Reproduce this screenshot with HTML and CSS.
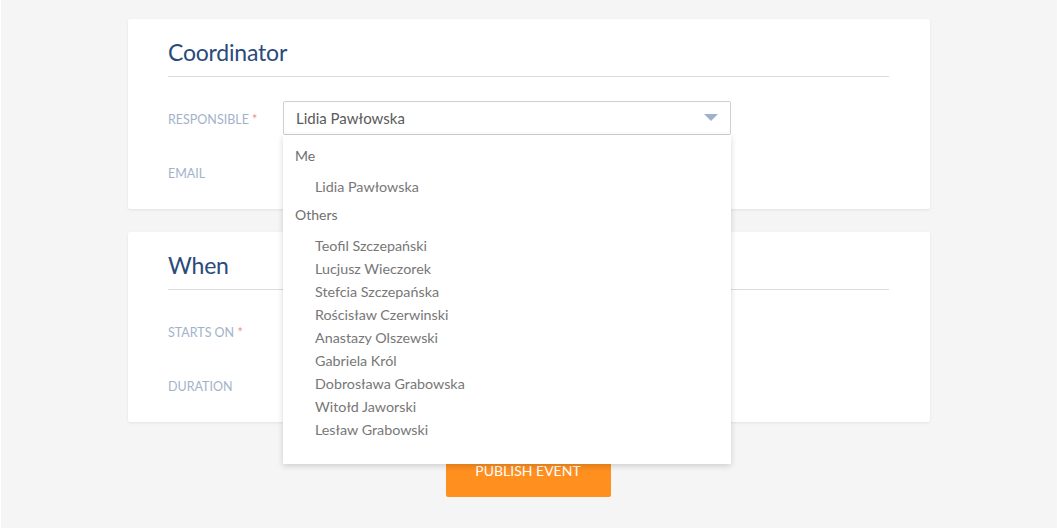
FILE: index.html
```html
<!DOCTYPE html>
<html lang="pl">
<head>
<meta charset="utf-8">
<title>Event form</title>
<link rel="stylesheet" href="styles.css">
</head>
<body>
<div class="page">
  <div class="container">
    <section class="card">
      <h2 class="card-title">Coordinator</h2>
      <div class="form-row">
        <label class="label">RESPONSIBLE <span class="req">*</span></label>
        <div class="field">
          <div class="select">
            <span class="select-value">Lidia Pawłowska</span>
            <svg class="caret" width="14" height="8" viewBox="0 0 14 8"><path d="M0 0 H14 L7 7 Z" fill="#9fb1cf"/></svg>
            <div class="dropdown">
              <div class="group-label">Me</div>
              <ul class="group">
                <li>Lidia Pawłowska</li>
              </ul>
              <div class="group-label">Others</div>
              <ul class="group">
                <li>Teofil Szczepański</li>
                <li>Lucjusz Wieczorek</li>
                <li>Stefcia Szczepańska</li>
                <li>Rościsław Czerwinski</li>
                <li>Anastazy Olszewski</li>
                <li>Gabriela Król</li>
                <li>Dobrosława Grabowska</li>
                <li>Witołd Jaworski</li>
                <li>Lesław Grabowski</li>
              </ul>
            </div>
          </div>
        </div>
      </div>
      <div class="form-row">
        <label class="label">EMAIL</label>
        <div class="field"></div>
      </div>
    </section>
    <section class="card">
      <h2 class="card-title">When</h2>
      <div class="form-row">
        <label class="label">STARTS ON <span class="req">*</span></label>
        <div class="field"></div>
      </div>
      <div class="form-row">
        <label class="label">DURATION</label>
        <div class="field"></div>
      </div>
    </section>
    <div class="actions">
      <button class="publish">PUBLISH EVENT</button>
    </div>
  </div>
</div>
</body>
</html>
```

FILE: styles.css
```css
html, body {
  margin: 0;
  padding: 0;
  background: #ffffff;
}
body {
  font-family: "Lato", "Open Sans", sans-serif;
}
.page {
  margin: 0 1px;
  background: #f5f5f5;
  height: 528px;
  overflow: hidden;
}
.container {
  width: 802px;
  margin: 0 auto;
  padding-top: 19px;
  display: flex;
  flex-direction: column;
  gap: 23px;
}
.card {
  background: #ffffff;
  border-radius: 2px;
  box-shadow: 0 1px 3px rgba(0, 0, 0, 0.08);
  padding: 0 41px 0 40px;
  height: 190px;
  box-sizing: border-box;
}
.card-title {
  margin: 0;
  height: 58px;
  box-sizing: border-box;
  padding-top: 19px;
  font-size: 23px;
  line-height: 28px;
  font-weight: 400;
  letter-spacing: -0.2px;
  color: #2b4a7c;
  border-bottom: 1px solid #dcdcdc;
}
.form-row {
  display: flex;
  height: 54px;
}
.card-title + .form-row {
  margin-top: 24px;
}
.label {
  width: 115px;
  flex: none;
  font-size: 12.5px;
  color: #a3b2cb;
  line-height: 34px;
  padding-top: 2px;
  box-sizing: border-box;
}
.req {
  color: #f08a8a;
}
.field {
  width: 448px;
}
.select {
  position: relative;
  height: 34px;
  box-sizing: border-box;
  border: 1px solid #cfcfcf;
  border-radius: 2px;
  display: flex;
  align-items: center;
  padding: 0 12px;
  background: #fff;
}
.select-value {
  flex: 1;
  font-size: 15px;
  color: #5a5a5a;
}
.caret {
  display: block;
}
.dropdown {
  position: absolute;
  top: 33px;
  left: -1px;
  right: -1px;
  height: 329px;
  box-sizing: border-box;
  background: #ffffff;
  box-shadow: 0 2px 6px rgba(0, 0, 0, 0.16);
  padding: 6px 12px 0 12px;
  z-index: 10;
}
.group-label {
  font-size: 14px;
  line-height: 30px;
  color: #6f6f6f;
}
.group {
  list-style: none;
  margin: 0;
  padding: 4px 0 2px 20px;
}
.group li {
  font-size: 14.3px;
  line-height: 23px;
  color: #777777;
}
.actions {
  display: flex;
  justify-content: center;
  padding-top: 2px;
  padding-right: 2px;
}
.publish {
  width: 165px;
  height: 50px;
  border: none;
  border-radius: 2px;
  background: #ff8f1f;
  color: #ffffff;
  font-family: inherit;
  font-size: 14px;
  padding: 0 0 3px 0;
}
```
